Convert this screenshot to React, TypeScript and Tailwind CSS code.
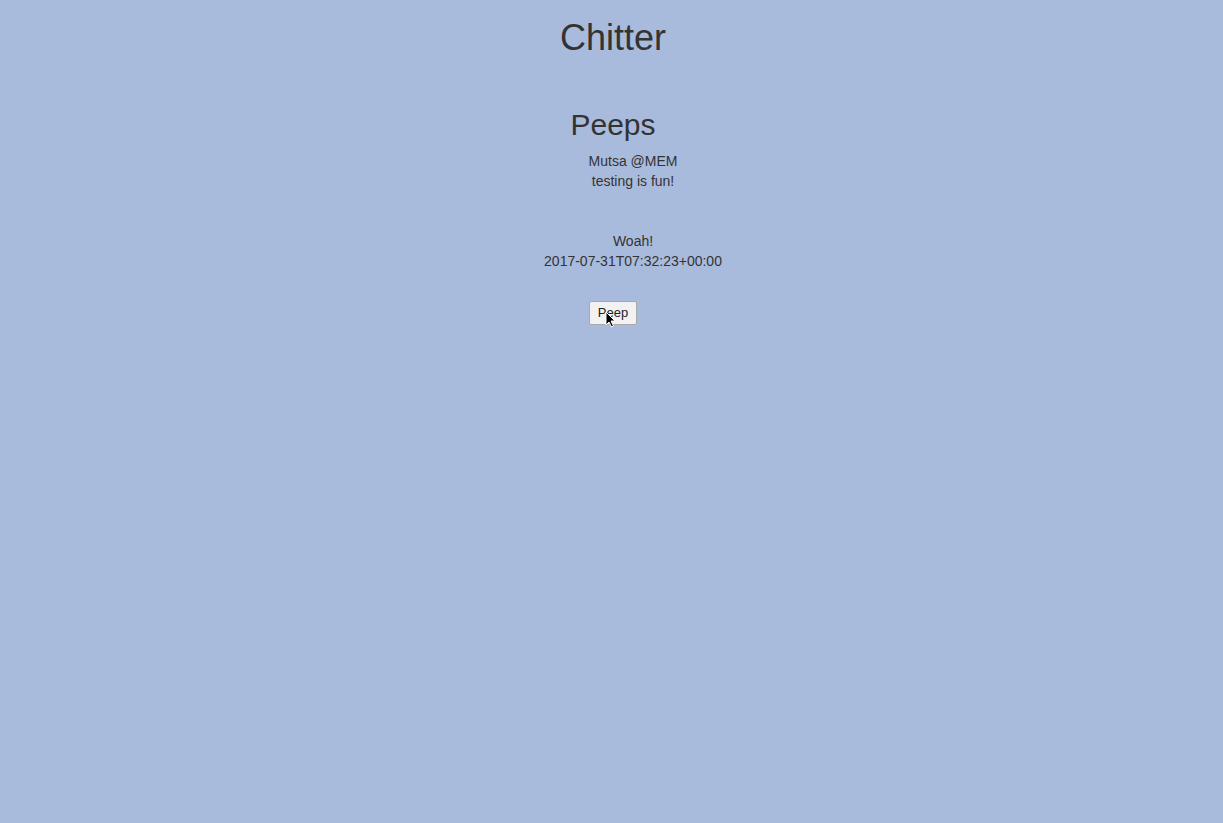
import React from 'react';

const peeps = [
  { author: 'Mutsa @MEM', body: 'testing is fun!' },
  { author: 'Woah!', body: '2017-07-31T07:32:23+00:00' },
];

const App: React.FC = () => {
  return (
    <div className="min-h-[823px] w-full pl-[3px] bg-[#a9bbdd] text-[#333] font-['Liberation_Sans',Arial,sans-serif] flex flex-col items-center">
      <h1 className="text-[36px] leading-[40px] mt-[18px]">Chitter</h1>

      <h2 className="text-[30px] leading-[34px] mt-[50px]">Peeps</h2>

      {/* peep list, indented like a ul */}
      <ul className="pl-[40px] mt-[9px] flex flex-col gap-[40px] text-[14px] leading-[20px] text-center">
        {peeps.map((p, i) => (
          <li key={i}>
            <div>{p.author}</div>
            <div>{p.body}</div>
          </li>
        ))}
      </ul>

      <div className="relative mt-[29px]">
        <button className="h-[24px] w-[48px] bg-[#f2f2f2] border border-[#a9a9a9] rounded-[2px] text-[13px] text-[#222] leading-none">
          Peep
        </button>
        {/* mouse pointer */}
        <svg className="absolute left-[16px] top-[11px]" width="11" height="17" viewBox="0 0 11 17">
          <path d="M1 1 L1 14 L4 11 L6.5 16 L8.5 15 L6 10 L10 10 Z" fill="#000" stroke="#fff" strokeWidth="1" />
        </svg>
      </div>
    </div>
  );
};

export default App;
